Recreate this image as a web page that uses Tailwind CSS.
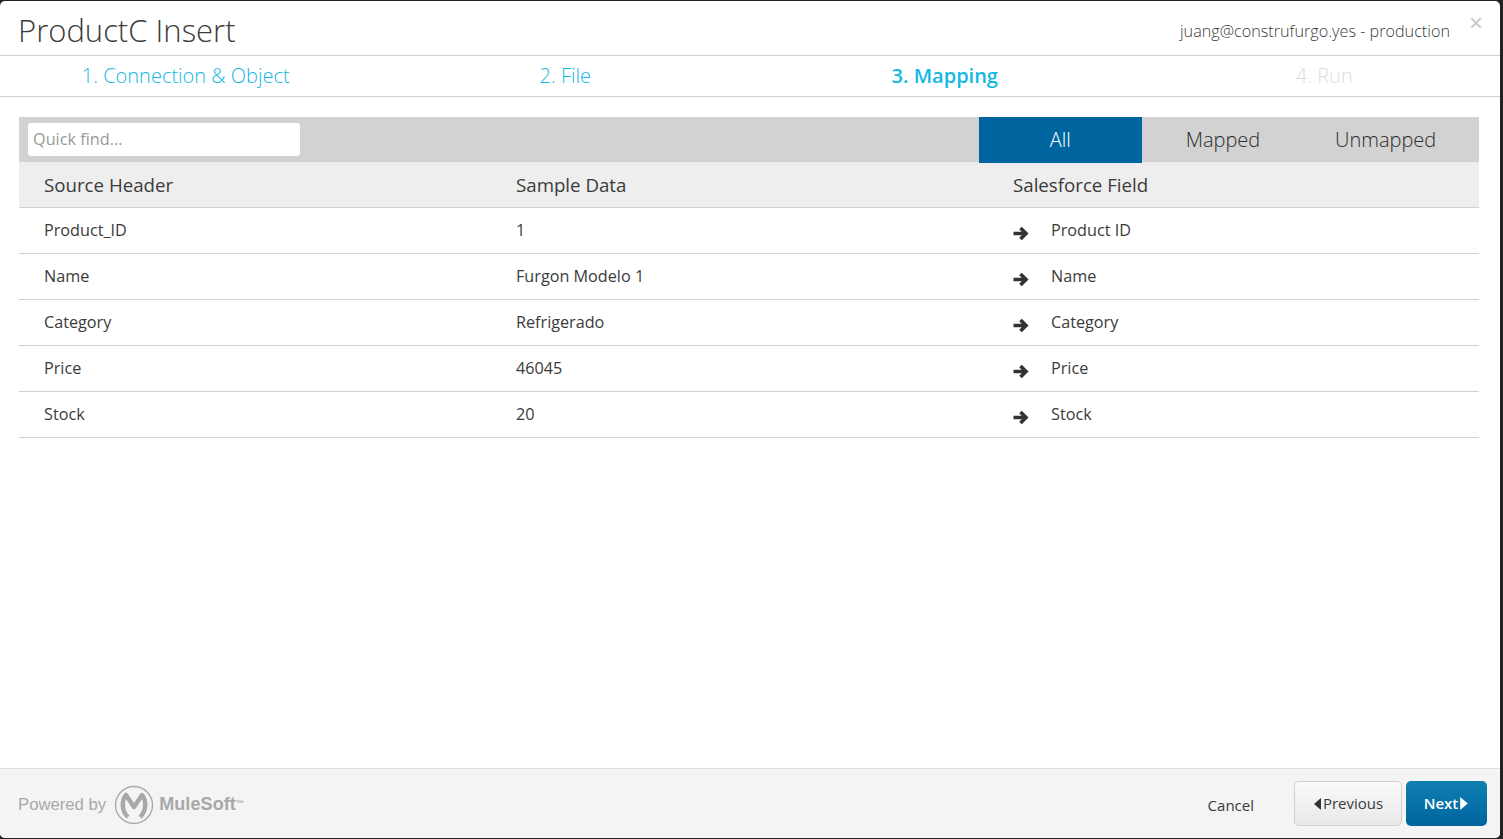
<!DOCTYPE html>
<html lang="en">
<head>
    <meta charset="UTF-8">
    <title>ProductC Insert</title>
    <script src="https://cdn.jsdelivr.net/npm/@tailwindcss/browser@4"></script>
</head>
<body class="bg-[#222222] h-[839px] overflow-hidden font-['Open_Sans',sans-serif] text-[#3b3b3b]">
    <div class="relative mt-px mr-[3px] h-[837px] bg-white rounded-[5px] overflow-hidden flex flex-col">
        <!-- title -->
        <header class="h-[55px] shrink-0 flex justify-between border-b border-[#d0d0d0] pl-[18px] pr-[50px]">
            <h1 class="text-[31px] font-light leading-[58px]">ProductC Insert</h1>
            <span class="text-[16.2px] font-light leading-[60px]">juang@construfurgo.yes - production</span>
        </header>
        <button class="absolute right-[17px] top-[10px] text-[24px] leading-6 text-[#c8c8c8] font-['Liberation_Sans',sans-serif]">×</button>

        <!-- steps -->
        <nav class="h-[41px] shrink-0 border-b border-[#d0d0d0] -ml-1 grid grid-cols-[repeat(4,379.5px)] text-center text-xl leading-[40px] font-light text-[#12b8e4]">
            <span>1. Connection &amp; Object</span>
            <span>2. File</span>
            <span class="font-semibold">3. Mapping</span>
            <span class="text-[#dddddd]">4. Run</span>
        </nav>

        <main class="flex-1 px-[19px] pr-[21px] pt-5">
            <div class="h-[45px] bg-[#d2d2d2] flex justify-between pl-[9px] pr-3">
                <input class="mt-[6px] w-[272px] h-[33px] pb-[2px] bg-white rounded-[3px] px-[5px] text-[16.25px] outline-none placeholder:text-[#999999]" placeholder="Quick find...">
                <div class="grid grid-cols-3 w-[488px] text-xl font-light text-center leading-[46px] text-[#2b2b2b]">
                    <span class="bg-[#00659f] text-white">All</span>
                    <span>Mapped</span>
                    <span>Unmapped</span>
                </div>
            </div>

            <div class="grid grid-cols-[472px_497px_1fr] h-[46px] bg-[#eeeeee] border-b border-[#d0d0d0] pl-[25px] text-[18.7px] leading-[46px]">
                <span>Source Header</span><span>Sample Data</span><span>Salesforce Field</span>
            </div>

            <div class="grid grid-cols-[472px_497px_1fr] h-[46px] border-b border-[#d0d0d0] pl-[25px] text-[16.2px] leading-[45px]">
                <span>Product_ID</span><span>1</span>
                <span class="flex items-center gap-[22px]"><svg class="w-[16px] h-[15px] mt-[5px]" viewBox="0 0 16 15"><path d="M0.500 7.500H12M7.500 2l5.500 5.500L7.500 13" fill="none" stroke="#333333" stroke-width="3.600"/></svg>Product ID</span>
            </div>
            <div class="grid grid-cols-[472px_497px_1fr] h-[46px] border-b border-[#d0d0d0] pl-[25px] text-[16.2px] leading-[45px]">
                <span>Name</span><span>Furgon Modelo 1</span>
                <span class="flex items-center gap-[22px]"><svg class="w-[16px] h-[15px] mt-[5px]" viewBox="0 0 16 15"><path d="M0.500 7.500H12M7.500 2l5.500 5.500L7.500 13" fill="none" stroke="#333333" stroke-width="3.600"/></svg>Name</span>
            </div>
            <div class="grid grid-cols-[472px_497px_1fr] h-[46px] border-b border-[#d0d0d0] pl-[25px] text-[16.2px] leading-[45px]">
                <span>Category</span><span>Refrigerado</span>
                <span class="flex items-center gap-[22px]"><svg class="w-[16px] h-[15px] mt-[5px]" viewBox="0 0 16 15"><path d="M0.500 7.500H12M7.500 2l5.500 5.500L7.500 13" fill="none" stroke="#333333" stroke-width="3.600"/></svg>Category</span>
            </div>
            <div class="grid grid-cols-[472px_497px_1fr] h-[46px] border-b border-[#d0d0d0] pl-[25px] text-[16.2px] leading-[45px]">
                <span>Price</span><span>46045</span>
                <span class="flex items-center gap-[22px]"><svg class="w-[16px] h-[15px] mt-[5px]" viewBox="0 0 16 15"><path d="M0.500 7.500H12M7.500 2l5.500 5.500L7.500 13" fill="none" stroke="#333333" stroke-width="3.600"/></svg>Price</span>
            </div>
            <div class="grid grid-cols-[472px_497px_1fr] h-[46px] border-b border-[#d0d0d0] pl-[25px] text-[16.2px] leading-[45px]">
                <span>Stock</span><span>20</span>
                <span class="flex items-center gap-[22px]"><svg class="w-[16px] h-[15px] mt-[5px]" viewBox="0 0 16 15"><path d="M0.500 7.500H12M7.500 2l5.500 5.500L7.500 13" fill="none" stroke="#333333" stroke-width="3.600"/></svg>Stock</span>
            </div>
        </main>

        <!-- footer -->
        <footer class="h-[70px] shrink-0 bg-[#f4f4f4] border-t border-[#dddddd] flex items-center pl-[18px] pr-[13px]">
            <span class="mt-[2px] text-[16.7px] text-[#a8a8a8] font-['Liberation_Sans',sans-serif]">Powered by</span>
            <svg class="w-[40px] h-[40px] ml-[8px] mt-[2px]" viewBox="0 0 40 40">
                <circle cx="20" cy="20" r="18.500" fill="none" stroke="#a8a8a8" stroke-width="1.400"/>
                <path d="M14 32C8 27 7 16 12 10L20 22 28 10C33 16 32 27 26 32" fill="none" stroke="#a8a8a8" stroke-width="4.500" stroke-linejoin="round"/>
            </svg>
            <span class="ml-[5px] mt-[2px] text-[18px] tracking-[0.1px] font-bold text-[#a8a8a8] font-['Liberation_Sans',sans-serif]">MuleSoft<sup class="text-[8px]">™</sup></span>
            <span class="ml-auto mt-[3px] text-[15px]">Cancel</span>
            <button class="ml-[40px] w-[108px] h-[45px] rounded-[5px] border border-[#d0d0d0] bg-gradient-to-b from-[#fafafa] to-[#e8e8e8] text-[15px] flex items-center justify-center gap-[2px]">
                <svg class="w-[8px] h-[12px]" viewBox="0 0 8 12"><path d="M8 0v12L1 6z" fill="#333333"/></svg>Previous
            </button>
            <button class="ml-[4px] w-[81px] h-[45px] rounded-[5px] bg-gradient-to-b from-[#0f7fb0] to-[#00659f] text-white text-[15px] font-semibold flex items-center justify-center gap-[2px]">
                Next<svg class="w-[9px] h-[13px]" viewBox="0 0 8 12"><path d="M0 0v12L7 6z" fill="#ffffff"/></svg>
            </button>
        </footer>
    </div>
</body>
</html>
